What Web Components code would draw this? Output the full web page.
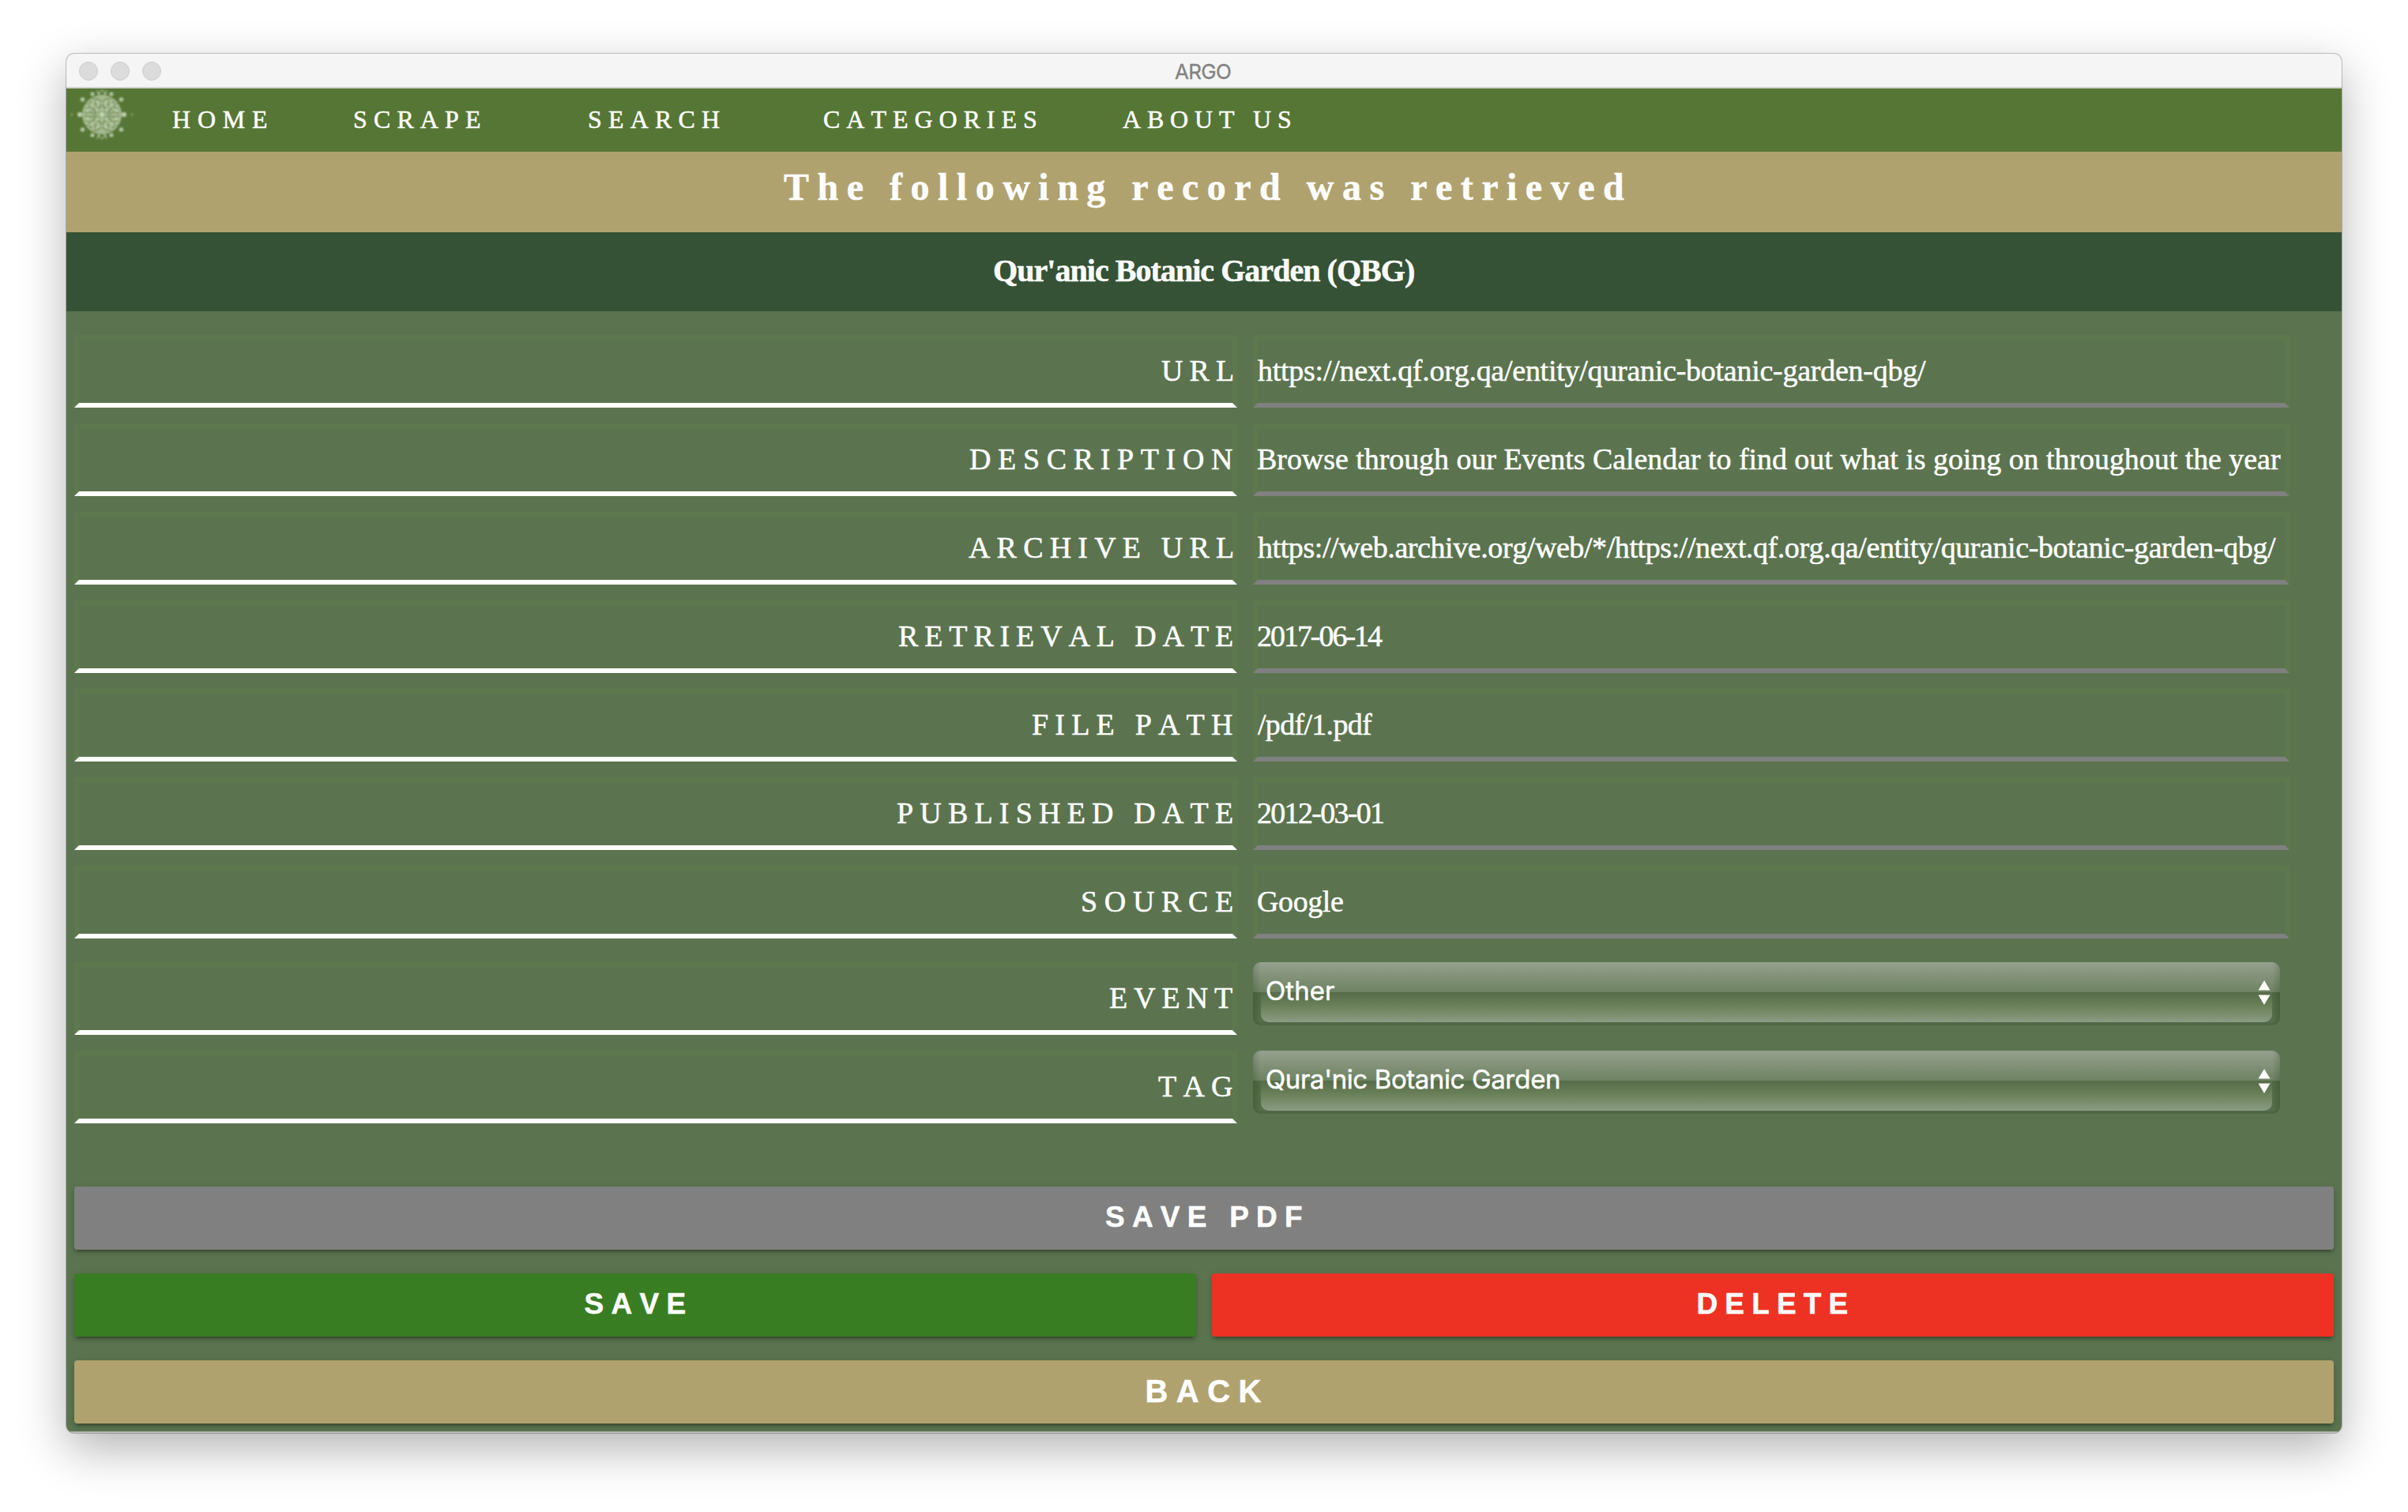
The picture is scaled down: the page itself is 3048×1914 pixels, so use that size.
<!DOCTYPE html>
<html lang="en">
<head>
<meta charset="utf-8">
<title>ARGO</title>
<style>
  html, body { margin: 0; background: #fff; }
  body { width: 3048px; height: 1914px; overflow: hidden; font-family: "Liberation Serif", "Times New Roman", serif; color: #fff; }
</style>
</head>
<body>
<argo-window></argo-window>
<script>
const define = (name, html, setup) => {
  const tpl = document.createElement('template');
  tpl.innerHTML = html;
  customElements.define(name, class extends HTMLElement {
    connectedCallback() {
      if (this.shadowRoot) return;
      this.attachShadow({ mode: 'open' }).appendChild(tpl.content.cloneNode(true));
      if (setup) setup(this, this.shadowRoot);
    }
  });
};

/* One line of tracked text whose glyphs span exactly the given width. */
customElements.define('fit-text', class extends HTMLElement {
  connectedCallback() {
    if (this.shadowRoot) return;
    const root = this.attachShadow({ mode: 'open' });
    root.innerHTML = `<style>
      :host { display: block; flex: none; white-space: pre; text-align: left; font-kerning: none; font-variant-ligatures: none; }
      span { display: block; width: max-content; -webkit-text-stroke: var(--stroke, .5px) currentColor; }
    </style><span></span>`;
    const text = this.getAttribute('text');
    const w = +this.getAttribute('w');
    const span = root.querySelector('span');
    span.textContent = text;
    this.style.width = w + 'px';
    const cs = getComputedStyle(this);
    const ctx = document.createElement('canvas').getContext('2d');
    ctx.font = `${cs.fontWeight} ${cs.fontSize} ${cs.fontFamily}`;
    ctx.fontKerning = 'none';
    ctx.letterSpacing = '0.001px';
    const m = ctx.measureText(text);
    const ink = m.actualBoundingBoxRight + m.actualBoundingBoxLeft;
    span.style.letterSpacing = ((w - ink) / (text.length - 1)).toFixed(3) + 'px';
    span.style.marginLeft = m.actualBoundingBoxLeft.toFixed(2) + 'px';
  }
});

define('title-bar', `<style>
  :host { display: flex; box-sizing: border-box; height: 44px; background: #f5f5f5; border-bottom: 2px solid #d2d2d2; padding-left: 16px; font: 26px/45px Inter, sans-serif; color: #828282; --stroke: .3px; }
  .dots { display: flex; gap: 16px; padding-top: 10px; width: 1387px; }
  i { width: 22px; height: 22px; border: 1px solid #cdcdcd; border-radius: 50%; background: #dcdcdc; }
</style><div class="dots"><i></i><i></i><i></i></div><fit-text text="ARGO" w="71"></fit-text>`);

define('argo-logo', `<style>:host { display: block; width: 84px; height: 80px; } svg { display: block; }</style>
<svg width="84" height="66" viewBox="86 112 84 66" fill="#dfe9d3"></svg>`, (el, root) => {
  const svg = root.querySelector('svg');
  const cx = 129, cy = 145;
  let s = `<defs><filter id="f"><feGaussianBlur stdDeviation="1"/></filter></defs><g filter="url(#f)">
    <circle cx="${cx}" cy="${cy}" r="25" fill="#a9bd95" opacity=".95"/>`;
  const mirror = (x, y, r, c, o) => {
    for (const a of [1, -1]) for (const b of [1, -1])
      s += `<circle cx="${cx + a * x}" cy="${cy + b * y}" r="${r}" fill="${c}" opacity="${o}"/>`;
  };
  mirror(12, 26, 2.6, '#d2dec6', .75);
  mirror(24.5, 19, 2.8, '#d2dec6', .75);
  mirror(28, 0, 3, '#d2dec6', .6);
  mirror(38, 0, 1.5, '#a9bd95', .35);
  mirror(4, 27, 2.2, '#a9bd95', .8);
  mirror(1, 30, 1.4, '#a9bd95', .6);
  mirror(6, 30, 1.3, '#a9bd95', .6);
  for (const d of ['M3 4Q8 2 11 7T20 8', 'M2 10Q7 8 8 14T16 15', 'M7 1L14 3L22 2', 'M1 16L6 20L12 20', 'M14 10L20 14', 'M4 7L1 13'])
    for (const a of [1, -1]) for (const b of [1, -1])
      s += `<path d="${d}" transform="translate(${cx} ${cy}) scale(${a} ${b})" fill="none" stroke="#708c53" stroke-width="1.7"/>`;
  for (const p of [[18, 5], [13, 11], [6, 5], [5, 16], [18, 11], [11, 17], [5, 11], [0, 0]]) mirror(p[0], p[1], 1.5, '#e4ecdc', .6);
  svg.innerHTML = s + '</g>';
});

define('nav-bar', `<style>
  :host { display: flex; height: 80px; background: #567635; font-size: 32px; line-height: 78px; padding-left: 2px; }
  .items { display: grid; grid-template-columns: 231px 297px 297px 378px 214px; padding-left: 48px; }
</style><argo-logo></argo-logo><div class="items">
  <fit-text text="HOME" w="119"></fit-text><fit-text text="SCRAPE" w="158"></fit-text>
  <fit-text text="SEARCH" w="165"></fit-text><fit-text text="CATEGORIES" w="268"></fit-text>
  <fit-text text="ABOUT US" w="212"></fit-text></div>`);

define('page-banner', `<style>
  :host { display: flex; justify-content: center; font-weight: bold; }
  :host([kind=heading]) { height: 102px; background: #b0a26e; font-size: 48px; line-height: 89px; }
  :host([kind=record]) { height: 100px; background: #355236; font-size: 40px; line-height: 98px; }
</style><slot></slot>`);

define('field-box', `<style>
  :host { display: flex; box-sizing: border-box; height: 92px; border: 6px solid #5d784d; border-bottom-color: #808080; font-size: 38px; line-height: 79px; }
  :host([kind=label]) { justify-content: flex-end; border-bottom-color: #fff; }
</style><slot></slot>`);

define('glossy-select', `<style>
  :host { display: block; width: 1300px; height: 80px; border-radius: 10px; overflow: hidden; font: 33px/73px Inter, sans-serif;
    background: linear-gradient(90deg, rgba(0,0,0,.14), rgba(0,0,0,0) 10px, rgba(0,0,0,0) 1290px, rgba(0,0,0,.14)),
      linear-gradient(#96a18e 0, #6d8362 38px, #526a45 38px, #587049 76px, #506846 76px); }
  .face { display: flex; justify-content: space-between; box-sizing: border-box; height: 76px; margin: 0 10px; padding: 0 2px 0 7px; border-radius: 0 0 10px 10px;
    background: linear-gradient(#96a18e 0, #85937b 16px, #6d8362 38px, #566b48 38px, #6a8059 55px, #8b9c82 76px); }
  svg { display: block; margin-top: 23px; }
</style><div class="face"><slot></slot><svg width="16" height="32" viewBox="0 0 16 32" fill="#fff"><path d="M8 0L15.5 12.5H.5ZM.5 18.5H15.5L8 31Z"/></svg></div>`);

define('record-form', `<style>
  :host { display: grid; grid-template-columns: 1472px 1312px; column-gap: 20px; row-gap: 20px; padding: 30px 10px 0; }
  .gap { margin-top: 10px; }
</style>`, (el, root) => {
  const rows = [
    ['URL', 90, 'https://next.qf.org.qa/entity/quranic-botanic-garden-qbg/', 846],
    ['DESCRIPTION', 332, 'Browse through our Events Calendar to find out what is going on throughout the year', 1295],
    ['ARCHIVE URL', 334, 'https://web.archive.org/web/*/https://next.qf.org.qa/entity/quranic-botanic-garden-qbg/', 1289],
    ['RETRIEVAL DATE', 422, '2017-06-14', 158],
    ['FILE PATH', 253, '/pdf/1.pdf', 145],
    ['PUBLISHED DATE', 424, '2012-03-01', 159],
    ['SOURCE', 190, 'Google', 108],
  ];
  let h = '';
  for (const [l, lw, v, vw] of rows)
    h += `<field-box kind="label"><fit-text text="${l}" w="${lw}"></fit-text></field-box><field-box><fit-text text="${v}" w="${vw}"></fit-text></field-box>`;
  h += `<field-box class="gap" kind="label"><fit-text text="EVENT" w="155"></fit-text></field-box><glossy-select class="gap"><fit-text text="Other" w="86"></fit-text></glossy-select>`;
  h += `<field-box kind="label"><fit-text text="TAG" w="94"></fit-text></field-box><glossy-select><fit-text text="Qura'nic Botanic Garden" w="370"></fit-text></glossy-select>`;
  root.innerHTML += h;
});

define('action-button', `<style>
  :host { display: flex; flex: 1; justify-content: center; box-sizing: border-box; height: 80px; border-radius: 4px; font: bold 37px/78px "Liberation Sans", Arial, sans-serif;
    box-shadow: 0 4px 4px rgba(0,0,0,.14), 0 6px 2px -4px rgba(0,0,0,.2), 0 2px 10px rgba(0,0,0,.12); }
  :host([tone=grey]) { background: #808080; }
  :host([tone=green]) { background: #387d22; }
  :host([tone=red]) { background: #ed3224; }
  :host([tone=tan]) { background: #b0a26e; font-size: 40px; line-height: 78px; }
</style><slot></slot>`);

define('action-panel', `<style>
  :host { display: flex; flex-direction: column; gap: 30px; padding: 80px 10px 10px; }
  div { display: flex; gap: 20px; }
</style>
<div><action-button tone="grey"><fit-text text="SAVE PDF" w="248"></fit-text></action-button></div>
<div><action-button tone="green"><fit-text text="SAVE" w="127"></fit-text></action-button><action-button tone="red"><fit-text text="DELETE" w="189"></fit-text></action-button></div>
<div><action-button tone="tan"><fit-text text="BACK" w="145"></fit-text></action-button></div>`);

define('argo-window', `<style>
  :host { display: block; padding: 68px 84px 0; }
  main { width: 2880px; height: 1746px; border-radius: 10px; box-shadow: 0 0 0 1px rgba(0,0,0,.22), 0 20px 60px rgba(0,0,0,.3); background: #b9b9b9; }
  .clip { border-radius: 10px; overflow: hidden; height: 1746px; }
  .page { background: #5b744f; height: 1418px; }
</style><main><div class="clip">
  <title-bar></title-bar>
  <nav-bar></nav-bar>
  <page-banner kind="heading"><fit-text text="The following record was retrieved" w="1064"></fit-text></page-banner>
  <page-banner kind="record"><fit-text text="Qur'anic Botanic Garden (QBG)" w="532"></fit-text></page-banner>
  <div class="page"><record-form></record-form><action-panel></action-panel></div>
</div></main>`);
</script>
</body>
</html>
